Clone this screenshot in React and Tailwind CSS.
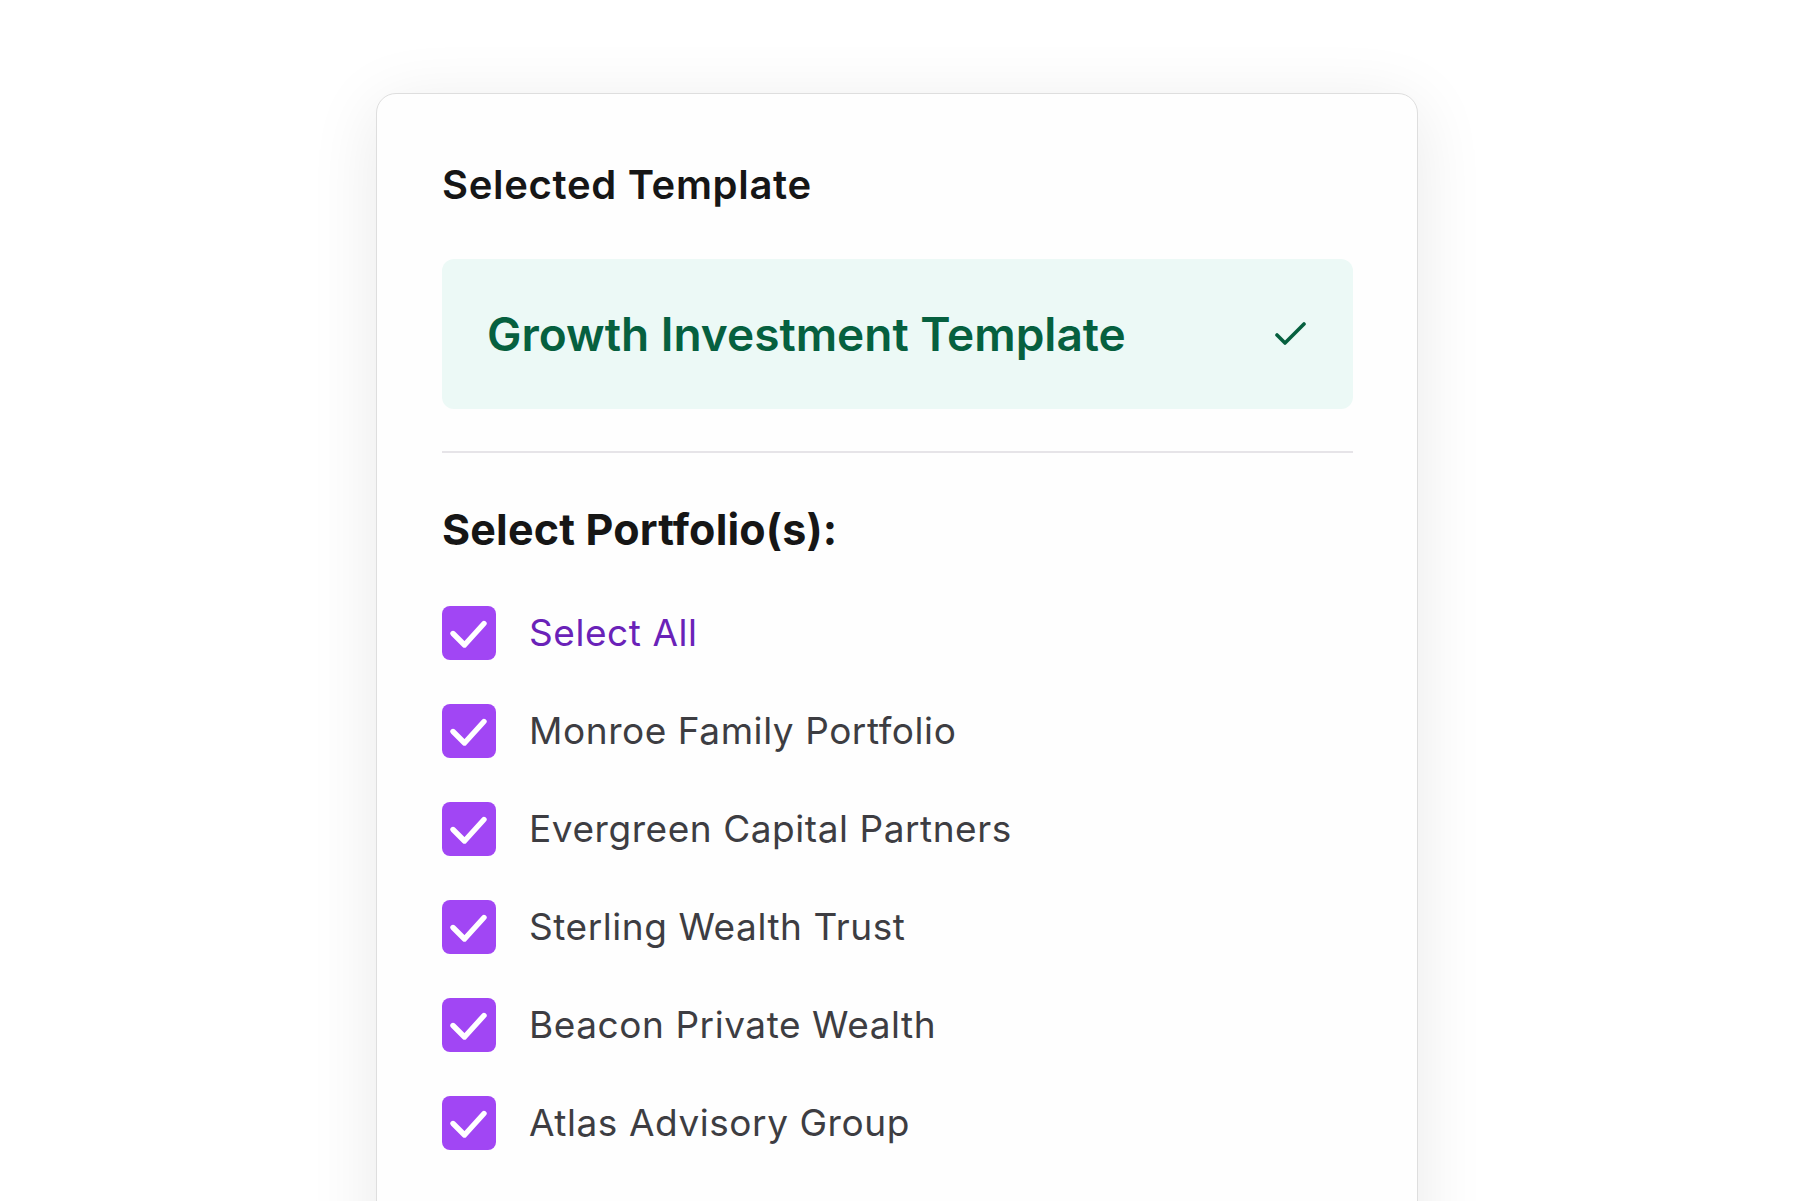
import React from "react";

const items = [
  "Monroe Family Portfolio",
  "Evergreen Capital Partners",
  "Sterling Wealth Trust",
  "Beacon Private Wealth",
  "Atlas Advisory Group",
];

function Box() {
  return (
    <div className="w-[54px] h-[54px] shrink-0 rounded-[8px] bg-[#a146f4] flex items-center justify-center">
      <svg width="54" height="54" viewBox="0 0 54 54" fill="none">
        <path d="M11 27.5 L22.5 39 L42 17.5" stroke="white" strokeWidth="5.4" strokeLinecap="round" strokeLinejoin="round" />
      </svg>
    </div>
  );
}

export default function App() {
  return (
    <div className="min-h-screen bg-white overflow-hidden" style={{ fontFamily: "Inter, 'Noto Sans', sans-serif" }}>
      <div className="mx-auto mt-[93px] w-[1042px] h-[1200px] rounded-[20px] border border-[#dedede] bg-[#fefefe] shadow-[0_12px_70px_rgba(0,0,0,0.09)] pl-[65px] pr-[64px] pt-[67px]">
        <h2 className="text-[40px] leading-[48px] font-semibold text-[#161616] tracking-[0.017em]">Selected Template</h2>
        <div className="mt-[50px] h-[150px] rounded-[12px] bg-[#ecf9f6] flex items-center justify-between pl-[45px] pr-[46px]">
          <span className="text-[46px] leading-[56px] font-semibold text-[#06603f]">Growth Investment Template</span>
          <svg width="32" height="26" viewBox="0 0 32 26" fill="none">
            <path d="M2 14 L10 22 L29 3" stroke="#06603f" strokeWidth="3.6" strokeLinecap="round" strokeLinejoin="round" />
          </svg>
        </div>
        <div className="mt-[42px] h-[2px] bg-[#e6e4e8]" />
        <h3 className="mt-[51px] text-[43px] leading-[50px] font-bold text-[#161616] tracking-[0.004em]">Select Portfolio(s):</h3>
        <div className="mt-[52px] flex flex-col gap-[44px]">
          <div className="flex items-center gap-[33px]">
            <Box />
            <span className="text-[37px] leading-[44px] text-[#6a22b8] tracking-[0.015em]">Select All</span>
          </div>
          {items.map((t) => (
            <div key={t} className="flex items-center gap-[33px]">
              <Box />
              <span className="text-[37px] leading-[44px] text-[#3d3d42] tracking-[0.015em]">{t}</span>
            </div>
          ))}
        </div>
      </div>
    </div>
  );
}
